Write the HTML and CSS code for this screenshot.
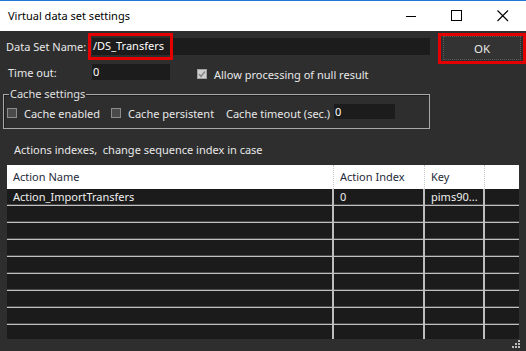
FILE: index.html
```html
<!DOCTYPE html>
<html>
<head>
<meta charset="utf-8">
<link rel="stylesheet" href="styles.css">
</head>
<body>
<div class="window">
  <div class="titlebar">
    <span class="title">Virtual data set settings</span>
    <div class="controls">
      <svg class="ctl" width="46" height="30" viewBox="0 0 46 30"><line x1="18" y1="15.5" x2="28" y2="15.5" stroke="#000" stroke-width="1"/></svg>
      <svg class="ctl" width="46" height="30" viewBox="0 0 46 30"><rect x="17.5" y="9.5" width="10" height="10" fill="none" stroke="#000" stroke-width="1"/></svg>
      <svg class="ctl" width="46" height="30" viewBox="0 0 46 30"><path d="M17.5 9.5 L28 20 M28 9.5 L17.5 20" stroke="#000" stroke-width="1.1"/></svg>
    </div>
  </div>
  <div class="content">
    <div class="row1">
      <span class="lbl name-lbl">Data Set Name:</span>
      <div class="field name-field"><span class="val">/DS_Transfers</span><div class="redbox name-red"></div></div>
      <div class="ok-wrap"><div class="ok-btn">OK</div></div>
    </div>
    <div class="row2">
      <span class="lbl time-lbl">Time out:</span>
      <div class="field time-field"><span class="val">0</span></div>
      <span class="chk checked"><svg width="10" height="10" viewBox="0 0 10 10"><path d="M2 5 L4 7.5 L8 2.5" fill="none" stroke="#8a8a8a" stroke-width="1.6"/></svg></span>
      <span class="lbl allow-lbl">Allow processing of null result</span>
    </div>
    <fieldset class="group">
      <legend>Cache settings</legend>
      <div class="group-row">
        <span class="chk"></span><span class="lbl w1">Cache enabled</span>
        <span class="chk chk2"></span><span class="lbl w2">Cache persistent</span>
        <span class="lbl ct-lbl">Cache timeout (sec.)</span>
        <div class="field ct-field"><span class="val">0</span></div>
      </div>
    </fieldset>
    <div class="note">Actions indexes,&nbsp; change sequence index in case</div>
    <div class="table">
      <div class="thead">
        <div class="c c1">Action Name</div>
        <div class="c c2">Action Index</div>
        <div class="c c3">Key</div>
        <div class="c c4"></div>
      </div>
      <div class="tr"><div class="c c1">Action_ImportTransfers</div><div class="c c2">0</div><div class="c c3">pims90...</div><div class="c c4"></div></div>
      <div class="tr"><div class="c c1"></div><div class="c c2"></div><div class="c c3"></div><div class="c c4"></div></div>
      <div class="tr"><div class="c c1"></div><div class="c c2"></div><div class="c c3"></div><div class="c c4"></div></div>
      <div class="tr"><div class="c c1"></div><div class="c c2"></div><div class="c c3"></div><div class="c c4"></div></div>
      <div class="tr"><div class="c c1"></div><div class="c c2"></div><div class="c c3"></div><div class="c c4"></div></div>
      <div class="tr"><div class="c c1"></div><div class="c c2"></div><div class="c c3"></div><div class="c c4"></div></div>
      <div class="tr"><div class="c c1"></div><div class="c c2"></div><div class="c c3"></div><div class="c c4"></div></div>
      <div class="tr"><div class="c c1"></div><div class="c c2"></div><div class="c c3"></div><div class="c c4"></div></div>
      <div class="tr last"><div class="c c1"></div><div class="c c2"></div><div class="c c3"></div><div class="c c4"></div></div>
    </div>
    <svg class="grip" width="10" height="10" viewBox="0 0 10 10">
      <rect x="7" y="1" width="2" height="2" fill="#bbb"/>
      <rect x="4" y="4" width="2" height="2" fill="#bbb"/><rect x="7" y="4" width="2" height="2" fill="#bbb"/>
      <rect x="1" y="7" width="2" height="2" fill="#bbb"/><rect x="4" y="7" width="2" height="2" fill="#bbb"/><rect x="7" y="7" width="2" height="2" fill="#bbb"/>
    </svg>
  </div>
</div>
</body>
</html>
```
FILE: styles.css
```css
html, body {
  margin: 0;
  padding: 0;
}
body {
  width: 526px;
  height: 351px;
  overflow: hidden;
  background: #2e2e2e;
  font-family: "Noto Sans", "Open Sans", sans-serif;
  font-size: 11px;
  color: #e8e8e8;
}
.window {
  width: 526px;
  height: 351px;
  display: flex;
  flex-direction: column;
}
.titlebar {
  height: 30px;
  border-top: 1px solid #1f78d1;
  background: #ffffff;
  display: flex;
  align-items: center;
  justify-content: space-between;
  color: #000;
}
.title {
  margin-left: 8px;
  font-size: 11px;
  line-height: 16px;
  margin-top: -1px;
}
.controls {
  display: flex;
}
.ctl {
  display: block;
}
.content {
  flex: 1;
  position: relative;
  background: #2e2e2e;
}
.lbl {
  line-height: 15px;
  white-space: nowrap;
}
.field {
  background: #1c1c1c;
  position: relative;
}
.val {
  color: #ffffff;
  line-height: 16px;
  padding-left: 1px;
  display: block;
}
.row1 {
  display: flex;
  height: 31px;
  margin-top: 2px;
}
.name-lbl {
  margin-left: 6px;
  margin-top: 6px;
  width: 86px;
}
.name-field {
  margin-top: 5px;
  width: 338px;
  height: 17px;
}
.redbox {
  position: absolute;
  border: 3px solid #e50000;
  box-sizing: border-box;
}
.name-red {
  left: -4px;
  top: -5px;
  width: 85px;
  height: 27px;
}
.ok-wrap {
  margin-left: 8px;
  width: 88px;
  height: 31px;
  box-sizing: border-box;
  border: 3px solid #e50000;
  padding: 0 2px;
}
.ok-btn {
  height: 24px;
  box-sizing: border-box;
  background: #333333;
  border: 1px dotted #5a5a5a;
  display: flex;
  align-items: center;
  justify-content: center;
  color: #e8e8e8;
  font-size: 11.5px;
}
.row2 {
  display: flex;
  height: 23px;
}
.time-lbl {
  margin-left: 8px;
  margin-top: 1px;
  width: 84px;
}
.time-field {
  width: 78px;
  height: 16px;
}
.chk {
  width: 10px;
  height: 10px;
  box-sizing: border-box;
  border: 1px solid #8c8c8c;
  background: #4a4a4a;
  display: inline-block;
  flex: none;
}
.chk svg {
  display: block;
  margin: -1px;
}
.row2 .chk {
  margin-left: 27px;
  margin-top: 5px;
}
.chk.checked {
  background: #d0d0d0;
  border-color: #a0a0a0;
}
.allow-lbl {
  margin-left: 7px;
  margin-top: 3px;
}
.group {
  margin: 0 0 0 3px;
  padding: 0;
  width: 427px;
  height: 42px;
  box-sizing: border-box;
  border: 1px solid #a8a8a8;
  box-shadow: inset 1px 1px 0 #1e1e1e;
}
.group legend {
  margin-left: 5px;
  padding: 0 1px;
  line-height: 14px;
  color: #e0e0e0;
}
.group-row {
  display: flex;
  align-items: center;
  height: 20px;
  margin-top: 2px;
}
.group-row .chk {
  margin-left: 3px;
}
.group-row .chk + .lbl {
  margin-left: 7px;
}
.w1 { width: 87px; }
.w2 { width: 98px; }
.group-row .chk2 {
  margin-left: 0;
}
.ct-lbl {
  width: 108px;
}
.ct-field {
  width: 61px;
  height: 15px;
  margin-top: -4px;
}
.note {
  margin-left: 14px;
  margin-top: 13px;
  line-height: 16px;
}
.table {
  margin-left: 7px;
  margin-top: 7px;
  width: 512px;
}
.thead {
  display: flex;
  height: 24px;
  background: #ffffff;
  color: #1e2b3a;
}
.thead .c {
  line-height: 24px;
  border-right: 1px dotted #c8c8c8;
}
.thead .c4 {
  border-right: none;
}
.c {
  box-sizing: border-box;
  padding-left: 6px;
  white-space: nowrap;
  overflow: hidden;
}
.c1 { width: 327px; }
.c2 { width: 91px; }
.c3 { width: 60px; }
.c4 { width: 34px; }
.tr {
  display: flex;
  height: 17px;
  background: #1b1b1b;
  border-bottom: 1px solid #c0c0c0;
  box-sizing: border-box;
  box-shadow: inset 0 -1px 0 #4a4a4a;
}
.tr .c {
  border-right: 2px solid #bdbdbd;
  line-height: 16px;
  color: #f0f0f0;
}
.tr .c4 {
  border-right: none;
}
.tr.last {
  height: 14px;
  border-bottom: none;
  box-shadow: none;
}
.grip {
  position: absolute;
  right: 5px;
  bottom: 2px;
}
```
